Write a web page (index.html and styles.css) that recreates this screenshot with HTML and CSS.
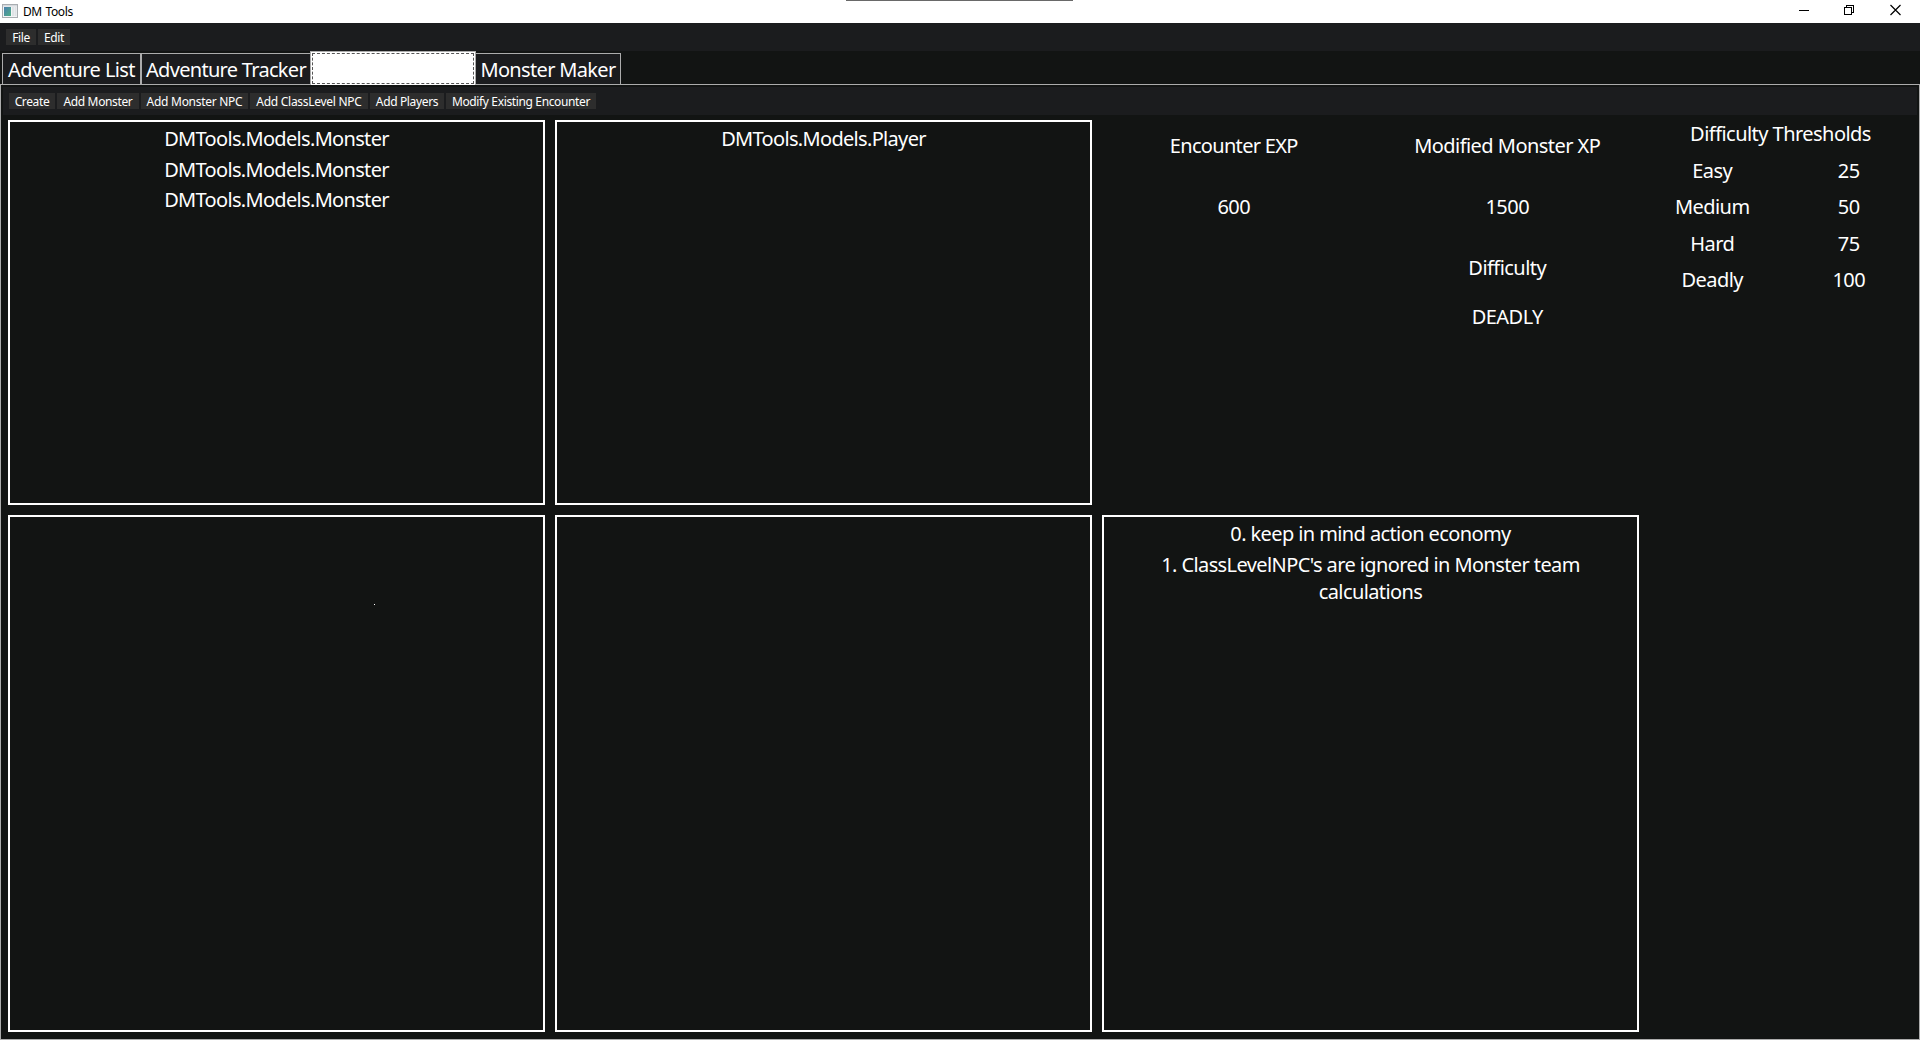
FILE: index.html
```html
<!DOCTYPE html>
<html lang="en">
<head>
<meta charset="utf-8">
<title>DM Tools</title>
<link rel="stylesheet" href="styles.css">
</head>
<body>
<header class="titlebar">
  <svg class="app-icon" width="16" height="14" viewBox="0 0 16 14">
    <defs><linearGradient id="g" x1="0" y1="0" x2="1" y2="1"><stop offset="0" stop-color="#4b7fae"/><stop offset="1" stop-color="#4fae86"/></linearGradient></defs>
    <rect x=".5" y=".5" width="15" height="13" fill="#f4f5f6" stroke="#a9adb1"/>
    <rect x="1" y="1" width="14" height="1.5" fill="#d5d9dd"/>
    <rect x="2" y="3" width="7" height="9" fill="url(#g)"/>
    <rect x="10" y="3" width="2.5" height="9" fill="#dfe3e6"/>
    <rect x="13" y="3" width="1.5" height="9" fill="#dfe3e6"/>
  </svg>
  <span class="title">DM Tools</span>
  <span class="top-handle"></span>
  <div class="controls">
    <svg width="46" height="23" viewBox="0 0 46 23" shape-rendering="crispEdges"><path d="M18 10.5h10" stroke="#000"/></svg>
    <svg width="46" height="23" viewBox="0 0 46 23" fill="none" stroke="#000" shape-rendering="crispEdges"><path d="M17.500 7.500h7v7h-7zM19.500 7V5.500h7v7H25"/></svg>
    <svg width="46" height="23" viewBox="0 0 46 23"><path d="M17.500 5l10 10M27.500 5l-10 10" stroke="#000" stroke-width="1.2"/></svg>
  </div>
</header>
<nav class="menubar">
  <button class="menu-btn w-file">File</button>
  <button class="menu-btn w-edit">Edit</button>
</nav>
<div class="tabs">
  <div class="tab t-list"><span>Adventure List</span></div>
  <div class="tab t-tracker"><span>Adventure Tracker</span></div>
  <div class="tab t-selected"></div>
  <div class="tab t-maker"><span>Monster Maker</span></div>
</div>
<main class="page">
  <nav class="toolbar">
    <button class="menu-btn w-create">Create</button>
    <button class="menu-btn w-monster">Add Monster</button>
    <button class="menu-btn w-npc">Add Monster NPC</button>
    <button class="menu-btn w-class">Add ClassLevel NPC</button>
    <button class="menu-btn w-players">Add Players</button>
    <button class="menu-btn w-modify">Modify Existing Encounter</button>
  </nav>
  <div class="grid">
    <section class="panel models">
      <p>DMTools.Models.Monster</p>
      <p>DMTools.Models.Monster</p>
      <p>DMTools.Models.Monster</p>
    </section>
    <section class="panel models">
      <p>DMTools.Models.Player</p>
    </section>
    <section class="summary">
      <span class="exp">Encounter EXP</span><span>Modified Monster XP</span>
      <span>600</span><span>1500</span>
      <span class="right">Difficulty</span>
      <span class="right">DEADLY</span>
    </section>
    <section class="thresholds">
      <span class="heading">Difficulty Thresholds</span>
      <span>Easy</span><span>25</span>
      <span>Medium</span><span>50</span>
      <span>Hard</span><span>75</span>
      <span>Deadly</span><span>100</span>
    </section>
    <section class="panel"><i class="dot"></i></section>
    <section class="panel"></section>
    <section class="panel notes">
      <p>0. keep in mind action economy</p>
      <p>1. ClassLevelNPC's are ignored in Monster team calculations</p>
    </section>
  </div>
</main>
</body>
</html>
```
FILE: styles.css
```css
* { box-sizing: border-box; }
body {
  margin: 0; width: 1920px; height: 1040px; overflow: hidden;
  display: flex; flex-direction: column;
  background: #121413; color: #fff;
  font: 20px/27px "Noto Sans", "Open Sans", sans-serif;
  letter-spacing: -0.54px;
}
p { margin: 0; }
.titlebar {
  position: relative; height: 23px; flex: none; display: flex; align-items: center;
  background: #fff; color: #000; font-size: 12px; line-height: 16px; letter-spacing: -0.4px; word-spacing: 1px;
}
.title { padding-top: 1px; }
.app-icon { margin: 0 5px 1px 2px; }
.top-handle { position: absolute; left: 846px; top: 0; width: 227px; height: 1px; background: #696969; }
.controls { margin-left: auto; margin-right: 1px; display: flex; }
.menubar, .toolbar { display: flex; gap: 2px; height: 28px; padding: 6px; background: #1b1c1e; flex: none; }
.menu-btn {
  height: 16px; padding: 1px 0 0; border: 0; background: #2d2d2d; color: #fff;
  font: 12px/15px "Noto Sans", "Open Sans", sans-serif; letter-spacing: -0.36px; white-space: nowrap;
}
.w-file { width: 30px; }
.w-edit { width: 32px; }
.w-create { width: 46px; }
.w-monster { width: 82px; }
.w-npc { width: 107px; letter-spacing: -0.28px; }
.w-class { width: 118px; letter-spacing: -0.28px; }
.w-players { width: 74px; }
.w-modify { width: 150px; }
.tabs { display: flex; height: 33px; padding-left: 2px; align-items: flex-end; flex: none; }
.tab {
  height: 31px; padding-top: 2px; background: #1b1c1e;
  border: 1px solid #acacac; border-bottom: 0; text-align: center; white-space: nowrap;
}
.t-list { width: 139px; letter-spacing: -0.6px; }
.t-tracker { width: 170px; letter-spacing: -0.7px; }
.t-maker { width: 145px; border-left: 0; letter-spacing: -0.66px; }
.t-selected {
  width: 166px; height: 34px; margin: 0 0 -1px -1px; padding: 1px; z-index: 1;
  background: #fff; border-color: #acacac;
}
.t-selected::before { content: ""; display: block; height: 29px; border: 1px dashed #555; }
.page { flex: 1; min-height: 0; border: 1px solid #acacac; padding: 2px; display: flex; flex-direction: column; }
.grid {
  flex: 1; min-height: 0; display: grid;
  grid-template-columns: 547px 547px 547px 1fr; grid-template-rows: 395px 527px;
}
.panel { margin: 5px; border: 2px solid #fff; padding: 3px 40px; text-align: center; }
.panel p + p { margin-top: 3.6px; }
.models { letter-spacing: -0.68px; }
.notes { letter-spacing: -0.6px; }
.dot { display: block; width: 1px; height: 1px; margin: 84px 0 0 324px; background: #fff; }
.summary, .thresholds {
  display: grid; grid-template-columns: 1fr 1fr; align-content: start; align-items: center; text-align: center;
}
.summary { grid-template-rows: 60.9px 60.9px 60.9px 37px; }
.exp { letter-spacing: -0.68px; }
.thresholds { grid-auto-rows: 36.6px; padding-top: 0.3px; }
.heading { grid-column: 1 / 3; }
.right { grid-column: 2; }
```
